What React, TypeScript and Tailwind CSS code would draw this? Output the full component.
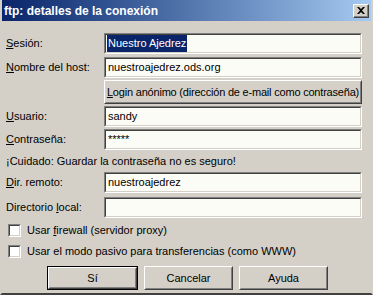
import React from "react";

const font = { fontFamily: '"Liberation Sans", Arial, sans-serif' };

function Field({ label, value, selected }: { label: React.ReactNode; value?: string; selected?: boolean }) {
  return (
    <div className="flex h-[21px] items-center">
      <div className="w-[98px] text-[11px] text-black">{label}</div>
      <div className="flex h-[21px] w-[258px] items-center border border-t-[#808080] border-l-[#808080] border-r-white border-b-white bg-[#fbfcf6]">
        <div className="flex h-full w-full items-center border border-t-[#404040] border-l-[#404040] border-r-[#d4d0c8] border-b-[#d4d0c8] pl-[1px] text-[11px] text-black">
          {value && (
            <span className={selected ? "bg-[#0a246a] px-[1px] text-white" : "px-[1px]"}>{value}</span>
          )}
        </div>
      </div>
    </div>
  );
}

function Btn({ children, def, w }: { children: React.ReactNode; def?: boolean; w: string }) {
  return (
    <div className={`${w} h-[24px] ${def ? "border border-black" : ""}`}>
      <div className="h-full w-full border border-t-white border-l-white border-r-[#404040] border-b-[#404040] bg-[#d4d0c8]">
        <div className="flex h-full w-full items-center justify-center whitespace-nowrap border border-t-[#d4d0c8] border-l-[#d4d0c8] border-r-[#808080] border-b-[#808080] text-[11px] text-black">
          {children}
        </div>
      </div>
    </div>
  );
}

function Check({ children }: { children: React.ReactNode }) {
  return (
    <div className="flex h-[13px] items-center gap-[6px] pl-[2px]">
      <div className="h-[13px] w-[13px] border border-t-[#808080] border-l-[#808080] border-r-white border-b-white">
        <div className="h-full w-full border border-t-[#404040] border-l-[#404040] border-r-[#d4d0c8] border-b-[#d4d0c8] bg-white" />
      </div>
      <span className="text-[11px] text-black">{children}</span>
    </div>
  );
}

export default function App() {
  return (
    <div style={font} className="flex h-[295px] w-[373px] flex-col overflow-hidden border-x-2 border-b-2 border-x-[#d4d0c8] border-b-[#404040] bg-[#d4d0c8]">
      <div className="flex h-[21px] shrink-0 items-center justify-between bg-gradient-to-r from-[#0a246a] to-[#a6caf0] pl-[2px] pr-[2px]">
        <span className="text-[12px] font-bold text-white">ftp: detalles de la conexión</span>
        <div className="h-[14px] w-[16px] border border-t-white border-l-white border-r-[#404040] border-b-[#404040] bg-[#d4d0c8]">
          <div className="flex h-full w-full items-center justify-center border-r border-b border-r-[#808080] border-b-[#808080]">
            <svg width="8" height="7" viewBox="0 0 8 7">
              <path d="M0 0h2l2 2 2-2h2L5 3.5 8 7H6L4 5 2 7H0l3-3.5z" fill="#000" />
            </svg>
          </div>
        </div>
      </div>
      <div className="flex flex-col pl-[4px] pt-[12px]">
        <Field label={<><u>S</u>esión:</>} value="Nuestro Ajedrez" selected />
        <div className="h-[3px]" />
        <Field label={<><u>N</u>ombre del host:</>} value="nuestroajedrez.ods.org" />
        <div className="h-[2px]" />
        <div className="flex">
          <div className="w-[98px]" />
          <Btn w="w-[258px]">
            <span className="tracking-[-0.2px]"><u>L</u>ogin anónimo (dirección de e-mail como contraseña)</span>
          </Btn>
        </div>
        <div className="h-[2px]" />
        <Field label={<><u>U</u>suario:</>} value="sandy" />
        <div className="h-[2px]" />
        <Field label={<><u>C</u>ontraseña:</>} value="*****" />
        <div className="flex h-[22px] items-center pt-[1px] text-[11px] text-black">¡Cuidado: Guardar la contraseña no es seguro!</div>
        <Field label={<><u>D</u>ir. remoto:</>} value="nuestroajedrez" />
        <div className="h-[4px]" />
        <Field label={<>Directorio <u>l</u>ocal:</>} />
        <div className="h-[6px]" />
        <Check>Usar <u>f</u>irewall (servidor proxy)</Check>
        <div className="h-[8px]" />
        <Check>Usar el modo pasivo para transferencias (como WWW)</Check>
        <div className="mt-[8px] flex gap-[6px] pl-[41px]">
          <Btn def w="w-[91px]">Sí</Btn>
          <Btn w="w-[89px]">Cancelar</Btn>
          <Btn w="w-[89px]">Ayuda</Btn>
        </div>
      </div>
    </div>
  );
}
